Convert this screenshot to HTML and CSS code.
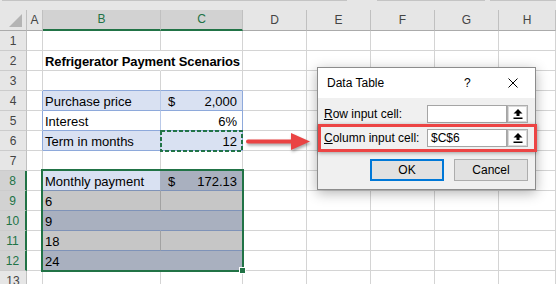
FILE: index.html
```html
<!DOCTYPE html>
<html lang="en">
<head>
  <meta charset="UTF-8" />
  <meta name="viewport" content="width=device-width, initial-scale=1.0"/>
  <title>Data Table : Refrigerator Payment Scenarios</title>
  <link rel="stylesheet" href="styles.css">
</head>
<body>
  <div class="app">
    <div class="topbar"><span class="bar b1"></span><span class="bar b2"></span><span class="bar b3"></span></div>

    <div class="sheet">
      <div class="row head">
        <div class="c rh corner">
          <svg width="27" height="21" viewBox="0 0 27 21"><polygon points="22,4 22,17 9,17" fill="#b4b4b4"/></svg>
        </div>
        <div class="c ca">A</div>
        <div class="c cb on">B</div>
        <div class="c cc on">C</div>
        <div class="c cd">D</div>
        <div class="c cd">E</div>
        <div class="c cd">F</div>
        <div class="c cd">G</div>
        <div class="c ch">H</div>
      </div>

      <div class="row">
        <div class="c rh">1</div><div class="c ca"></div><div class="c cb"></div><div class="c cc"></div>
        <div class="c cd"></div><div class="c cd"></div><div class="c cd"></div><div class="c cd"></div><div class="c ch"></div>
      </div>
      <div class="row">
        <div class="c rh">2</div><div class="c ca"></div>
        <div class="c cb spill"><b class="heading">Refrigerator Payment Scenarios</b></div><div class="c cc"></div>
        <div class="c cd"></div><div class="c cd"></div><div class="c cd"></div><div class="c cd"></div><div class="c ch"></div>
      </div>
      <div class="row">
        <div class="c rh">3</div><div class="c ca"></div><div class="c cb tb-top"></div><div class="c cc tb-top"></div>
        <div class="c cd"></div><div class="c cd"></div><div class="c cd"></div><div class="c cd"></div><div class="c ch"></div>
      </div>
      <div class="row">
        <div class="c rh">4</div><div class="c ca tb-left"></div>
        <div class="c cb tb band">Purchase price</div>
        <div class="c cc tb tb-end band money"><span>$</span><span>2,000</span></div>
        <div class="c cd"></div><div class="c cd"></div><div class="c cd"></div><div class="c cd"></div><div class="c ch"></div>
      </div>
      <div class="row">
        <div class="c rh">5</div><div class="c ca tb-left"></div>
        <div class="c cb tb">Interest</div>
        <div class="c cc tb tb-end num">6%</div>
        <div class="c cd"></div><div class="c cd"></div><div class="c cd"></div><div class="c cd"></div><div class="c ch"></div>
      </div>
      <div class="row">
        <div class="c rh">6</div><div class="c ca tb-left"></div>
        <div class="c cb tb band">Term in months</div>
        <div class="c cc tb tb-end band num">12</div>
        <div class="c cd"></div><div class="c cd"></div><div class="c cd"></div><div class="c cd"></div><div class="c ch"></div>
      </div>
      <div class="row">
        <div class="c rh">7</div><div class="c ca"></div><div class="c cb"></div><div class="c cc"></div>
        <div class="c cd"></div><div class="c cd"></div><div class="c cd"></div><div class="c cd"></div><div class="c ch"></div>
      </div>
      <div class="row">
        <div class="c rh on">8</div><div class="c ca"></div>
        <div class="c cb active">Monthly payment</div>
        <div class="c cc sel-blue money"><span>$</span><span>172.13</span></div>
        <div class="c cd"></div><div class="c cd"></div><div class="c cd"></div><div class="c cd"></div><div class="c ch"></div>
      </div>
      <div class="row">
        <div class="c rh on">9</div><div class="c ca"></div>
        <div class="c cb sel-grey">6</div><div class="c cc sel-grey"></div>
        <div class="c cd"></div><div class="c cd"></div><div class="c cd"></div><div class="c cd"></div><div class="c ch"></div>
      </div>
      <div class="row">
        <div class="c rh on">10</div><div class="c ca"></div>
        <div class="c cb sel-blue">9</div><div class="c cc sel-blue"></div>
        <div class="c cd"></div><div class="c cd"></div><div class="c cd"></div><div class="c cd"></div><div class="c ch"></div>
      </div>
      <div class="row">
        <div class="c rh on">11</div><div class="c ca"></div>
        <div class="c cb sel-grey">18</div><div class="c cc sel-grey"></div>
        <div class="c cd"></div><div class="c cd"></div><div class="c cd"></div><div class="c cd"></div><div class="c ch"></div>
      </div>
      <div class="row">
        <div class="c rh on">12</div><div class="c ca"></div>
        <div class="c cb sel-blue">24</div><div class="c cc sel-blue"></div>
        <div class="c cd"></div><div class="c cd"></div><div class="c cd"></div><div class="c cd"></div><div class="c ch"></div>
      </div>
      <div class="row">
        <div class="c rh">13</div><div class="c ca"></div><div class="c cb"></div><div class="c cc"></div>
        <div class="c cd"></div><div class="c cd"></div><div class="c cd"></div><div class="c cd"></div><div class="c ch"></div>
      </div>
    </div>

    <!-- things drawn over the grid -->
    <svg class="ants" width="83" height="22" viewBox="0 0 83 22">
      <rect x="1" y="1" width="81" height="20" fill="none" stroke="#217346" stroke-width="2" stroke-dasharray="4 2"/>
    </svg>
    <div class="selection"></div>
    <div class="handle"></div>

    <svg class="arrow" width="80" height="30" viewBox="0 0 80 30">
      <line x1="8" y1="13.5" x2="56" y2="13.5" stroke="#ea4343" stroke-width="4" stroke-linecap="round"/>
      <polygon points="51,5 70,13.5 51,22" fill="#ea4343"/>
    </svg>

    <div class="dialog">
      <div class="dlg-title">
        <span class="dlg-name">Data Table</span>
        <span class="help">?</span>
        <svg class="close" width="10" height="10" viewBox="0 0 10 10">
          <path d="M0.5 0.5 L9.5 9.5 M9.5 0.5 L0.5 9.5" stroke="#000" stroke-width="1"/>
        </svg>
      </div>
      <div class="dlg-body">
        <div class="field">
          <label><u>R</u>ow input cell:</label>
          <div class="input"></div>
          <div class="pick">
            <svg width="10" height="10" viewBox="0 0 10 10"><path d="M5 0 L9.5 4.5 L6.5 4.5 L6.5 7 L3.5 7 L3.5 4.5 L0.5 4.5 Z M0.5 8.5 H9.5 V10 H0.5 Z" fill="#000"/></svg>
          </div>
        </div>
        <div class="field">
          <label><u>C</u>olumn input cell:</label>
          <div class="input">$C$6</div>
          <div class="pick">
            <svg width="10" height="10" viewBox="0 0 10 10"><path d="M5 0 L9.5 4.5 L6.5 4.5 L6.5 7 L3.5 7 L3.5 4.5 L0.5 4.5 Z M0.5 8.5 H9.5 V10 H0.5 Z" fill="#000"/></svg>
          </div>
        </div>
        <div class="buttons">
          <div class="btn default">OK</div>
          <div class="btn">Cancel</div>
        </div>
      </div>
      <div class="callout"></div>
    </div>
  </div>
</body>
</html>
```

FILE: styles.css
```css
* {
  box-sizing: border-box;
}
body {
  margin: 0;
  background: #fff;
  font-family: 'Liberation Sans', Arial, sans-serif;
  overflow: hidden;
}
.app {
  position: relative;
  width: 556px;
  height: 284px;
  overflow: hidden;
}
.topbar {
  display: flex;
  height: 10px;
  background: #e6e6e6;
}
.bar {
  height: 1px;
  background: #c4c4c4;
}
.b1 { margin-left: 2px; width: 345px; }
.b2 { margin-left: 30px; width: 108px; }
.b3 { margin-left: 5px; flex: 1; }

.row {
  display: flex;
  height: 20px;
}
.c {
  flex: none;
  height: 100%;
  border-right: 1px solid #d4d4d4;
  border-bottom: 1px solid #d4d4d4;
  padding: 1px 2px 0;
  font-size: 13px;
  line-height: 19px;
  white-space: nowrap;
  color: #000;
}
.rh { width: 27px; }
.ca { width: 16px; }
.cb { width: 118px; }
.cc { width: 82px; }
.cd { width: 64px; }
.ch { flex: 1; }

/* headers */
.row.head {
  height: 21px;
  background: #e6e6e6;
}
.head .c {
  padding: 0;
  font-size: 12px;
  line-height: 20px;
  text-align: center;
  color: #444;
  border-right-color: #c0c0c0;
  border-bottom-color: #ababab;
}
.head .c.on {
  background: #d2d2d2;
  color: #217346;
  border-bottom: 2px solid #217346;
  line-height: 19px;
}
.corner svg {
  display: block;
}
.rh {
  padding: 1px 0 0;
  background: #e6e6e6;
  font-size: 12px;
  text-align: center;
  color: #444;
  border-right-color: #c0c0c0;
  border-bottom-color: #cccccc;
}
.rh.on {
  background: #d2d2d2;
  color: #217346;
  border-right: 2px solid #217346;
}

/* cells */
.spill {
  border-right-color: transparent;
  overflow: visible;
}
.heading {
  letter-spacing: -0.1px;
}
.tb-top { border-bottom-color: #8ea9db; }
.tb-left { border-right-color: #8ea9db; }
.tb {
  border-bottom-color: #8ea9db;
  border-right-color: #b9c9e8;
}
.tb-end { border-right-color: #8ea9db; }
.band { background: #d9e1f2; }
.num {
  text-align: right;
  padding-right: 5px;
}
.money {
  display: flex;
  justify-content: space-between;
  padding-left: 7px;
  padding-right: 5px;
}
.active {
  background: #d9e1f2;
  border-right-color: #a9b1c1;
  border-bottom-color: #7f93b8;
}
.sel-blue {
  background: #a9b0bf;
  border-right-color: #a9b0bf;
  border-bottom-color: #7f93b8;
}
.sel-grey {
  background: #c6c6c6;
  border-right-color: #a2a2a2;
  border-bottom-color: #7f93b8;
}
.cc.sel-blue,
.cc.sel-grey {
  border-right-color: #d4d4d4;
}

/* overlays */
.ants {
  position: absolute;
  left: 160px;
  top: 130px;
}
.selection {
  position: absolute;
  left: 41px;
  top: 169px;
  width: 203px;
  height: 103px;
  border: 2px solid #217346;
}
.handle {
  position: absolute;
  left: 239px;
  top: 267px;
  width: 7px;
  height: 7px;
  background: #217346;
  border: 1px solid #fff;
}
.arrow {
  position: absolute;
  left: 240px;
  top: 128px;
  filter: drop-shadow(1px 2px 1.5px rgba(0, 0, 0, 0.35));
}

/* dialog */
.dialog {
  position: absolute;
  left: 317px;
  top: 67px;
  width: 219px;
  height: 123px;
  background: #f0f0f0;
  border: 1px solid #8c8c8c;
  box-shadow: 0 3px 12px rgba(0, 0, 0, 0.3);
  font-size: 12px;
  color: #000;
}
.dlg-title {
  display: flex;
  align-items: center;
  height: 30px;
  padding-left: 9px;
  background: #fff;
}
.dlg-name {
  flex: 1;
}
.help {
  width: 7px;
  margin-right: 37px;
}
.close {
  margin-right: 17px;
}
.dlg-body {
  display: flex;
  flex-direction: column;
  gap: 6px;
  padding: 7px 7px 0 6px;
}
.field {
  display: flex;
  align-items: center;
  height: 18px;
}
.field label {
  width: 103px;
}
.input {
  width: 80px;
  height: 18px;
  padding-left: 3px;
  line-height: 16px;
  background: #fff;
  border: 1px solid #a5a5a5;
}
.pick {
  display: flex;
  align-items: center;
  justify-content: center;
  width: 21px;
  height: 18px;
  background: #fdfdfd;
  border: 1px solid #adadad;
  box-shadow: inset 0 0 0 1px #d9d9d9;
}
.pick svg {
  display: block;
}
.buttons {
  display: flex;
  gap: 10px;
  margin-top: 6px;
  padding-left: 46px;
}
.btn {
  width: 74px;
  height: 22px;
  line-height: 20px;
  text-align: center;
  background: #e1e1e1;
  border: 1px solid #adadad;
}
.btn.default {
  border: 2px solid #0078d7;
  line-height: 18px;
}
.callout {
  position: absolute;
  left: 0;
  top: 56px;
  width: 219px;
  height: 28px;
  border: 3px solid #ec4444;
  box-shadow: 0 1px 4px rgba(0, 0, 0, 0.35);
}
```
